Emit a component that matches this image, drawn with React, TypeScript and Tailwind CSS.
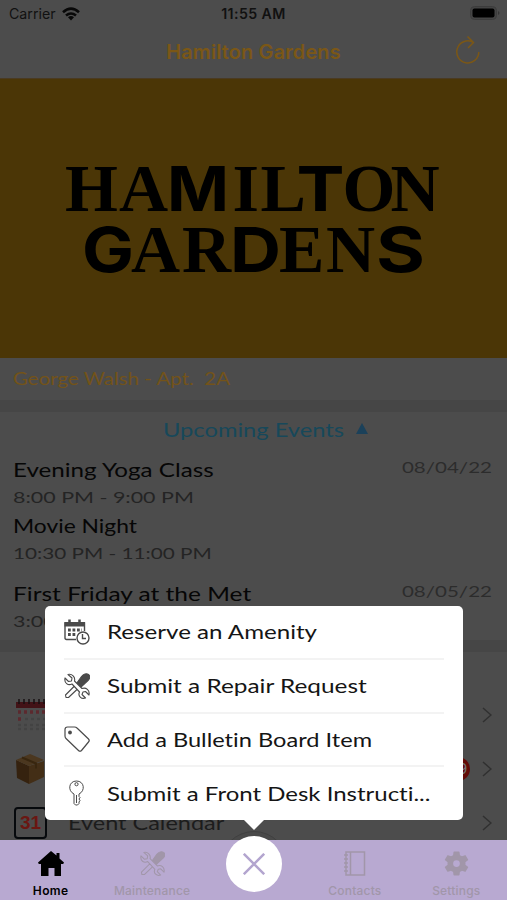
import React from 'react';

interface EventEntry {
    title: string;
    time: string;
    date?: string;
    className: string;
    titleWidth: string;
    timeWidth: string;
}

interface MenuEntry {
    label: string;
    stretch: string;
    icon: React.ReactNode;
}

const events: EventEntry[] = [
    { title: 'Evening Yoga Class', time: '8:00 PM - 9:00 PM', date: '08/04/22', className: 'h-14', titleWidth: 'scale-x-[1.24]', timeWidth: 'scale-x-[1.34]' },
    { title: 'Movie Night', time: '10:30 PM - 11:00 PM', className: 'h-[68px]', titleWidth: 'scale-x-[1.17]', timeWidth: 'scale-x-[1.295]' },
    { title: 'First Friday at the Met', time: '3:00 PM - 5:00 PM', date: '08/05/22', className: 'h-14', titleWidth: 'scale-x-[1.255]', timeWidth: 'scale-x-[1.34]' },
];

const ToolsIcon = ({ className, fill = 'white' }: { className: string; fill?: string }) => (
    <svg viewBox="0 0 26 26" className={className} fill="none" stroke="currentColor" strokeWidth="1.1" strokeLinejoin="round">
        <path d="M2 24.500 1.500 22l9-9 3 3-9 8.500z" fill={fill} />
        <path d="m12.500 10.500 5-7c2-2.500 5-3.500 7-2s1.500 4-.5 6l-7 6.500z" fill="currentColor" />
        <path d="M4 1.500 8 5 7.500 8 4.500 8.500 1 5C0 10 4 13 8 11l7.500 8c-2 4 2 7.500 6 6L18 21.500l1-2.500 2.500-.5L25 22c1-5-3-8-7-6.500L10.500 8C11.500 4 8 .5 4 1.500z" fill={fill} />
    </svg>
);

const CalendarClockIcon = () => (
    <svg viewBox="0 0 26 26" className="size-[26px]" fill="none" stroke="currentColor" strokeWidth="1.4">
        <path d="M12 20.500H2.500Q1 20.500 1 19V4h19.500v8" />
        <path d="M.5 3h20.500v4.500H.5z" fill="currentColor" stroke="none" />
        <path d="M5.500.5v4M15.500.5v4" strokeWidth="2.500" />
        <path d="M4 11h14M4 15.500h8" strokeWidth="2.800" strokeDasharray="2.800 1.700" />
        <circle cx="19" cy="19" r="6" fill="white" />
        <path d="M18.500 15v4.500h3.500" />
    </svg>
);

const TagIcon = () => (
    <svg viewBox="0 0 26 26" className="size-[26px]" fill="none" stroke="currentColor" strokeWidth="1.200" strokeLinejoin="round">
        <path d="M1 3.500Q1 1 3.500 1h7q1.500 0 2.500 1l11.500 11q1.500 1.500 0 3L17.500 24.500q-1.500 1.500-3 0L2 12.500Q1 11.500 1 10z" />
        <circle cx="6" cy="6.500" r="1.900" fill="currentColor" stroke="none" />
    </svg>
);

const KeyIcon = () => (
    <svg viewBox="0 0 26 26" className="size-[26px]" fill="none" stroke="currentColor" strokeWidth="1" strokeLinejoin="round">
        <path d="M10 14C3.500 11 4.500 1 12.500 1S21.500 11 15 14v2.500l1 1-1 1.500 1 1.500-1 1.500v1.500l-1.500 1.500h-2L10 23.500z" />
        <circle cx="12.500" cy="4.200" r="1.600" />
        <path d="M12.500 15v8" />
    </svg>
);

const menu: MenuEntry[] = [
    { label: 'Reserve an Amenity', stretch: 'scale-x-[1.237]', icon: <CalendarClockIcon /> },
    { label: 'Submit a Repair Request', stretch: 'scale-x-[1.25]', icon: <ToolsIcon className="size-[26px]" /> },
    { label: 'Add a Bulletin Board Item', stretch: 'scale-x-[1.21]', icon: <TagIcon /> },
    { label: 'Submit a Front Desk Instructi...', stretch: 'scale-x-[1.23]', icon: <KeyIcon /> },
];

const StatusBar = () => (
    <div className="grid h-7 grid-cols-3 items-center px-[9px] text-[14.200px] text-[#111]">
        <div className="flex items-center gap-1.5">
            <span>Carrier</span>
            <svg viewBox="0 0 18 14" className="h-3.5 w-[18px]" fill="none" stroke="#080808" strokeWidth="2.600">
                <path d="M1 5.200q8-7 16 0M4 8.600q5-4.200 10 0" />
                <path d="m9 13.500-3-3.200q3-2.400 6 0z" fill="#080808" stroke="none" />
            </svg>
        </div>
        <span className="text-center font-semibold tracking-[0.4px]">11:55 AM</span>
        <svg viewBox="0 0 31 14" className="-mr-[3px] -mt-[2px] h-3.5 w-[31px] justify-self-end">
            <rect x=".5" y=".5" width="26" height="13" rx="4" fill="#444" stroke="#3c3c3c" />
            <rect x="2.500" y="2.500" width="22" height="9" rx="2" fill="#000" />
            <path d="M28 5q3 2 0 4z" fill="#353535" />
        </svg>
    </div>
);

// Sans capitals set wider than the serif ones in the building's wordmark
const SansLetter = ({ children, width }: { children: string; width: number }) => (
    <tspan className="font-[Inter] text-[62px]" textLength={width} lengthAdjust="spacingAndGlyphs">{children}</tspan>
);

const Logo = () => (
    <svg viewBox="0 0 507 279" className="h-[279px] w-full bg-[#4b3606] font-['Liberation_Serif'] text-[68px] font-bold">
        <text x="65 119 167 232.500 260.500 296.500 342.500 390.500" y="132">
            HA<SansLetter width={62}>M</SansLetter>IL<SansLetter width={48}>T</SansLetter>ON
        </text>
        <text x="82 131 182 230 279 326 376" y="193">
            <SansLetter width={52}>G</SansLetter>AR<SansLetter width={51}>D</SansLetter>EN<SansLetter width={49}>S</SansLetter>
        </text>
    </svg>
);

const Chevron = () => (
    <svg viewBox="0 0 10 16" className="h-4 w-2.5" fill="none" stroke="#303030" strokeWidth="1.500">
        <path d="m1 1 8 7-8 7" />
    </svg>
);

const ListRow = ({ icon, label, badge }: { icon: React.ReactNode; label: string; badge?: string }) => (
    <div className="flex h-[54px] items-center pl-3.5 pr-[15px]">
        {icon}
        <span className="ml-[21px] origin-left scale-x-[1.235] font-[Lato] text-[19px] text-[#1c1c1c]">{label}</span>
        <div className="ml-auto flex items-center gap-3">
            {badge && <span className="flex size-6 items-center justify-center rounded-full bg-[#640b08] text-[15px] text-[#777]">{badge}</span>}
            <Chevron />
        </div>
    </div>
);

const TabItem = ({ icon, label, active }: { icon: React.ReactNode; label: string; active?: boolean }) => (
    <div className={`flex flex-1 flex-col items-center pt-2.5 ${active ? 'text-black' : 'text-[#a196a9]'}`}>
        <div className="flex h-[27px] items-center">{icon}</div>
        <span className={`mt-1.5 text-[12px] leading-4 ${active ? 'font-semibold tracking-[0.4px]' : 'font-medium tracking-[0.2px]'}`}>{label}</span>
    </div>
);

const App: React.FC = () => {
    return (
        <div className="relative flex h-[900px] w-[507px] flex-col overflow-hidden bg-[#4c4c4c] font-[Inter,sans-serif] [font-variant-ligatures:none]">
            <StatusBar />

            {/* Title bar */}
            <header className="relative flex h-[51px] items-center justify-center border-b border-[#4a3a22] pb-[2px]">
                <h1 className="text-[20px] font-semibold tracking-[0.1px] text-[#7b5716]">Hamilton Gardens</h1>
                <svg viewBox="0 0 26 30" className="absolute right-[26px] top-2 h-[30px] w-[26px]" fill="none" stroke="#7b5716" strokeWidth="1.500">
                    <path d="M23.800 16A11 11 0 1 1 18.500 6.500M12.500.5l6 6-5.500 5.500" />
                </svg>
            </header>

            <Logo />

            <div className="h-[42px] px-[13px] pt-[7px]">
                <span className="inline-block origin-left scale-x-[1.17] whitespace-pre font-[Lato] text-[17.500px] leading-[28px] text-[#735319]">George Walsh - Apt.  2A</span>
            </div>
            <div className="h-3 bg-[#464646]" />

            {/* Upcoming events */}
            <section className="h-[228px] font-[Lato]">
                <div className="flex h-[42px] items-start pl-[163px] pt-[3px]">
                    <span className="w-[182px] origin-left scale-x-[1.185] whitespace-nowrap text-[20px] leading-[28px] text-[#17485a]">Upcoming Events</span>
                    <svg viewBox="0 0 12 11" className="ml-[11px] mt-2 h-[11px] w-3 fill-[#1b415a]">
                        <path d="m6 0 6 11H0z" />
                    </svg>
                </div>
                {events.map(event => (
                    <div key={event.title} className={`flex justify-between pl-[13px] pr-[15px] ${event.className}`}>
                        <div>
                            <div className={`origin-left whitespace-nowrap text-[19.500px] leading-8 text-[#060606] ${event.titleWidth}`}>{event.title}</div>
                            <div className={`origin-left whitespace-nowrap text-[16px] leading-[21px] text-[#242424] ${event.timeWidth}`}>{event.time}</div>
                        </div>
                        {event.date && <span className="origin-right scale-x-[1.325] text-[15.500px] leading-[27px] text-[#2c2c2c]">{event.date}</span>}
                    </div>
                ))}
            </section>
            <div className="h-3 bg-[#464646]" />

            <section className="pt-9">
                <ListRow
                    label="Amenities"
                    icon={
                        <svg viewBox="0 0 34 34" className="size-[34px]">
                            <path d="M2 4h30v6H2z" fill="#421317" />
                            <path d="M5 1v5m5-5v5m5-5v5m5-5v5m5-5v5m5-5v5" stroke="#171012" strokeWidth="1.500" />
                            <path d="M4 14h27M4 21h5" stroke="#5c292e" strokeWidth="3.500" strokeDasharray="3 3" />
                            <path d="M11 21h20M4 27h27M4 31h27" stroke="#434343" strokeWidth="2.500" strokeDasharray="3 3" />
                        </svg>
                    }
                />
                <ListRow
                    label="Packages"
                    badge="29"
                    icon={
                        <svg viewBox="0 0 34 34" className="size-[34px]">
                            <path d="m2 8 13 6v18L3 26z" fill="#35220f" />
                            <path d="m15 14 15-5v16l-15 7z" fill="#432e16" />
                            <path d="m2 8 14-6 14 6-15 6z" fill="#4b371f" />
                            <path d="m8 5.500 14 6v5" fill="none" stroke="#38260f" strokeWidth="2" />
                        </svg>
                    }
                />
                <ListRow
                    label="Event Calendar"
                    icon={
                        <div className="flex h-8 w-[33px] items-center justify-center rounded-[4px] border-[2.500px] border-[#06090c] font-['Liberation_Sans'] text-[19px] font-bold text-[#6a1712]">31</div>
                    }
                />
            </section>

            {/* Tab bar with its raised centre button */}
            <div className="absolute left-[220px] top-[831px] size-[68px] rounded-full border border-[#404040] bg-[#494949]" />
            <nav className="absolute inset-x-0 bottom-0 flex h-[60px] bg-[#b8a9d1]">
                <TabItem
                    active
                    label="Home"
                    icon={
                        <svg viewBox="0 0 26 25" className="h-[25px] w-[26px]" fill="currentColor">
                            <path d="m13 0 5.500 4.500V2h3v5.500L26 11.500l-.8 1.500H23v12h-6.500v-8h-6v8H3V13H.8L0 11.500z" />
                        </svg>
                    }
                />
                <TabItem label="Maintenance" icon={<ToolsIcon className="size-[25px]" fill="#b8a9d1" />} />
                <div className="flex-1" />
                <TabItem
                    label="Contacts"
                    icon={
                        <svg viewBox="0 0 22 25" className="h-[25px] w-[22px]" fill="none" stroke="currentColor" strokeWidth="1.500">
                            <path d="M2 1h18.500v23H2zM6.500 1v23" />
                            <path d="M0 4h4M0 8h4M0 12h4M0 16h4M0 20h4" />
                        </svg>
                    }
                />
                <TabItem
                    label="Settings"
                    icon={
                        <svg viewBox="2 2 20 20" className="size-[25px]" fill="currentColor">
                            <path d="M19.140 12.940c.04-.3.06-.61.06-.94s-.02-.64-.07-.94l2.030-1.580a.49.49 0 0 0 .12-.61l-1.920-3.320a.49.49 0 0 0-.59-.22l-2.390.96c-.5-.38-1.030-.7-1.620-.94l-.36-2.540A.48.48 0 0 0 13.920 2.400h-3.840c-.24 0-.43.17-.47.41l-.36 2.540c-.59.24-1.130.57-1.620.94l-2.390-.96a.48.48 0 0 0-.59.22L2.740 8.870a.48.48 0 0 0 .12.61l2.030 1.580c-.05.3-.09.63-.09.94s.02.64.07.94l-2.030 1.580a.49.49 0 0 0-.12.61l1.920 3.320c.12.22.37.29.59.22l2.390-.96c.5.38 1.030.7 1.620.94l.36 2.540c.05.24.24.41.48.41h3.840c.24 0 .44-.17.47-.41l.36-2.540c.59-.24 1.130-.56 1.620-.94l2.390.96c.22.08.47 0 .59-.22l1.920-3.320a.48.48 0 0 0-.12-.61zM12 14.700a2.700 2.700 0 1 1 0-5.400 2.700 2.700 0 0 1 0 5.400" />
                        </svg>
                    }
                />
            </nav>
            <button aria-label="Close" className="absolute bottom-2 left-[226px] flex size-14 items-center justify-center rounded-full bg-white">
                <svg viewBox="0 0 22 22" className="size-[22px]" fill="none" stroke="#b3a5cf" strokeWidth="2.500">
                    <path d="m.8.8 20.400 20.400m0-20.400L.8 21.200" />
                </svg>
            </button>

            {/* Action menu */}
            <div className="absolute left-[45px] top-[606px] h-[214px] w-[418px] rounded-[5px] bg-white px-[19px]">
                {menu.map((item, index) => (
                    <div key={item.label} className={`flex items-center ${index < menu.length - 1 ? 'h-[53.800px] border-b-2 border-[#f3f3f3]' : 'h-[52px]'}`}>
                        <span className="text-[#4a4a4a]">{item.icon}</span>
                        <span className={`ml-[17px] origin-left whitespace-nowrap font-[Lato] text-[19.500px] text-[#151515] ${item.stretch}`}>{item.label}</span>
                    </div>
                ))}
                <svg viewBox="0 0 22 11" className="absolute left-[198px] top-[213px] h-[11px] w-[22px] fill-white">
                    <path d="M0 0h22L11 11z" />
                </svg>
            </div>
        </div>
    );
};

export default App;
